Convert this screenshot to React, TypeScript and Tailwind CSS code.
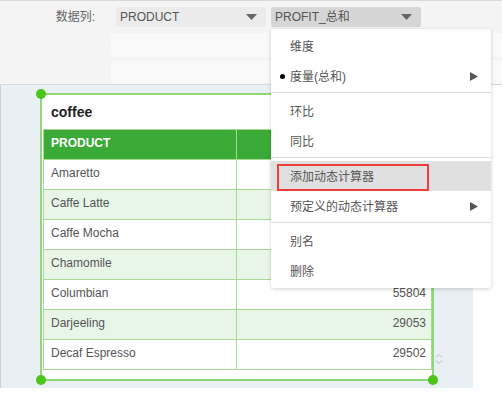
import React from 'react';

const rows = [
  { name: 'Amaretto', value: '' },
  { name: 'Caffe Latte', value: '' },
  { name: 'Caffe Mocha', value: '' },
  { name: 'Chamomile', value: '' },
  { name: 'Columbian', value: '55804' },
  { name: 'Darjeeling', value: '29053' },
  { name: 'Decaf Espresso', value: '29502' },
];

const Caret = () => (
  <svg width="11" height="6" viewBox="0 0 11 6" className="shrink-0">
    <path d="M0 0 L11 0 L5.5 6 Z" fill="#666" />
  </svg>
);

const SubArrow = () => (
  <svg width="8" height="9" viewBox="0 0 8 9" className="absolute right-[13px] top-[11px]">
    <path d="M0 0 L8 4.5 L0 9 Z" fill="#555" />
  </svg>
);

const Sep = () => <div className="mt-[1px] mb-[3px] h-px bg-[#dedede]" />;

const Item = ({ label, arrow, bullet }: { label: string; arrow?: boolean; bullet?: boolean }) => (
  <div className="relative flex h-[30px] items-center pl-[19px] pt-[1px] text-[12px] text-[#555]">
    {bullet && <span className="absolute left-[9px] top-[13px] h-[5px] w-[5px] rounded-full bg-black" />}
    {label}
    {arrow && <SubArrow />}
  </div>
);

const Handle = ({ pos }: { pos: string }) => (
  <span className={`absolute h-[10px] w-[10px] rounded-full bg-[#4cc418] ${pos}`} />
);

export default function App() {
  return (
    <div className="relative h-[393px] w-[502px] overflow-hidden bg-white font-['Liberation_Sans','Noto_Sans_CJK_SC',sans-serif]">
      {/* top panel */}
      <div className="h-[85px] border-t border-b border-[#d9d9d9] bg-[#f4f4f4] pt-[6px]">
        <div className="flex h-[20px] items-center">
          <div className="w-[95px] text-right text-[12px] text-[#666]">数据列:</div>
          <div className="ml-[21px] flex h-[20px] w-[150px] items-center justify-between rounded-[2px] bg-[#ebebeb] pl-[4px] pr-[9px] text-[12px] text-[#555]">
            <span>PRODUCT</span>
            <Caret />
          </div>
          <div className="ml-[5px] flex h-[20px] w-[150px] items-center justify-between rounded-[2px] bg-[#d6d6d6] pl-[4px] pr-[9px] text-[12px] text-[#555]">
            <span>PROFIT_总和</span>
            <Caret />
          </div>
        </div>
        <div className="ml-[111px] mt-[6px] h-[24px] rounded-l-[3px] bg-[#f9f9f9]" />
        <div className="ml-[111px] mt-[3px] h-[23px] rounded-l-[3px] bg-[#f9f9f9]" />
      </div>

      {/* canvas */}
      <div className="flex">
        <div className="w-px h-[303px] bg-[#d0d0d0]" />
        <div className="relative h-[303px] w-[472px] bg-[#e9f0f4] pt-[8px]">
          <div className="relative ml-[39px] h-[288px] w-[394px] border-2 border-[#8fd87a] bg-white">
            <div className="flex h-[34px] items-center pl-[9px] text-[14px] font-bold text-[#222]">coffee</div>
            <div className="ml-px w-[389px] border-b border-[#a9d994] text-[12px]">
              <div className="flex h-[30px] border-t border-l border-r border-[#a9d994] bg-[#3aab36] font-bold text-white">
                <div className="flex w-[193px] items-center border-r border-[#a9d994] pb-[3px] pl-[7px]">PRODUCT</div>
                <div className="flex-1" />
              </div>
              {rows.map((r, i) => (
                <div
                  key={r.name}
                  className={`flex h-[30px] border-t border-l border-r border-[#a9d994] text-[#555] ${i % 2 === 1 ? 'bg-[#e8f6e8]' : 'bg-white'}`}
                >
                  <div className="flex w-[193px] items-center border-r border-[#a9d994] pb-[3px] pl-[7px]">{r.name}</div>
                  <div className="flex flex-1 items-center justify-end pb-[3px] pr-[5px]">{r.value}</div>
                </div>
              ))}
            </div>
            <Handle pos="-left-[6px] -top-[6px]" />
            <Handle pos="-right-[6px] -top-[6px]" />
            <Handle pos="-left-[6px] -bottom-[6px]" />
            <Handle pos="-right-[6px] -bottom-[6px]" />
          </div>
          <svg width="8" height="12" viewBox="0 0 8 12" className="absolute left-[434px] top-[268px]">
            <path d="M1 4.5 L4 1.5 L7 4.5" fill="none" stroke="#bbb" strokeWidth="1" />
            <path d="M1 7.5 L4 10.5 L7 7.5" fill="none" stroke="#bbb" strokeWidth="1" />
          </svg>
        </div>
      </div>

      {/* context menu */}
      <div className="absolute left-[271px] top-[29px] w-[220px] rounded-[3px] bg-white pt-[2px] pb-[2px] shadow-[0_1px_4px_rgba(0,0,0,0.18)]">
        <Item label="维度" />
        <Item label="度量(总和)" bullet arrow />
        <Sep />
        <Item label="环比" />
        <Item label="同比" />
        <Sep />
        <div className="relative flex h-[30px] items-center bg-[#e0e0e0] pl-[19px] pt-[1px] text-[12px] text-[#555]">
          添加动态计算器
          <span className="absolute left-[6px] top-[3px] h-[27px] w-[152px] border-2 border-[#f23b3b]" />
        </div>
        <Item label="预定义的动态计算器" arrow />
        <Sep />
        <Item label="别名" />
        <Item label="删除" />
      </div>
    </div>
  );
}
